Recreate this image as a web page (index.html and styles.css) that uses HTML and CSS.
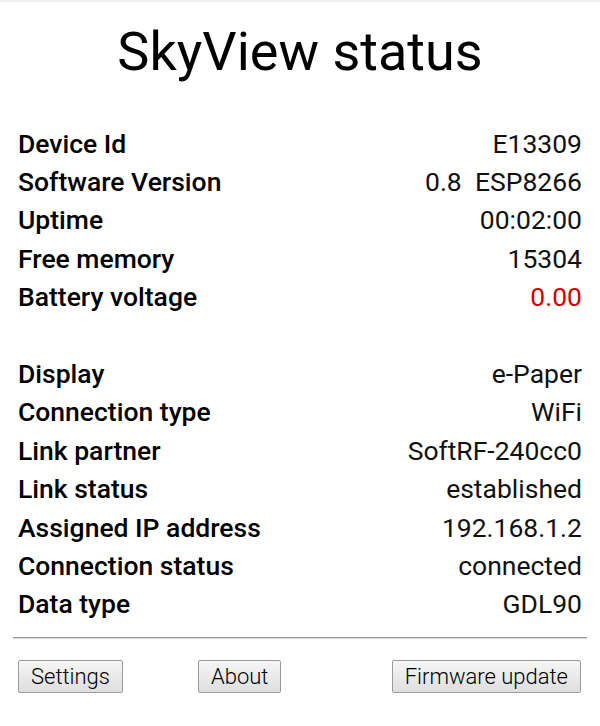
FILE: index.html
```html
<!DOCTYPE html>
<html>
<head>
<meta charset="utf-8">
<link rel="stylesheet" href="styles.css">
</head>
<body>
<div class="topline"></div>
<div class="page">
  <h1 class="title">SkyView status</h1>
  <div class="table">
    <div class="row"><span class="label">Device Id</span><span class="value">E13309</span></div>
    <div class="row"><span class="label">Software Version</span><span class="value">0.8&nbsp;&nbsp;ESP8266</span></div>
    <div class="row"><span class="label">Uptime</span><span class="value">00:02:00</span></div>
    <div class="row"><span class="label">Free memory</span><span class="value">15304</span></div>
    <div class="row"><span class="label">Battery voltage</span><span class="value red">0.00</span></div>
    <div class="row"></div>
    <div class="row"><span class="label">Display</span><span class="value">e-Paper</span></div>
    <div class="row"><span class="label">Connection type</span><span class="value">WiFi</span></div>
    <div class="row"><span class="label">Link partner</span><span class="value">SoftRF-240cc0</span></div>
    <div class="row"><span class="label">Link status</span><span class="value">established</span></div>
    <div class="row"><span class="label">Assigned IP address</span><span class="value">192.168.1.2</span></div>
    <div class="row"><span class="label">Connection status</span><span class="value">connected</span></div>
    <div class="row"><span class="label">Data type</span><span class="value">GDL90</span></div>
  </div>
  <hr class="rule">
  <div class="buttons">
    <button class="btn">Settings</button>
    <button class="btn about">About</button>
    <button class="btn fw">Firmware update</button>
  </div>
</div>
</body>
</html>
```
FILE: styles.css
```css
html, body {
  margin: 0;
  padding: 0;
  background: #fff;
}
body {
  font-family: Roboto, "Noto Sans", sans-serif;
  color: #000;
}
.topline {
  height: 2px;
  background: #eeeeee;
}
.page {
  padding: 0 13px;
}
.title {
  margin: 22px 0 0 0;
  font-size: 54px;
  line-height: 56px;
  font-weight: 400;
  text-align: center;
  height: 100px;
}
.table {
  padding: 0 5px;
}
.row {
  display: flex;
  justify-content: space-between;
  align-items: center;
  height: 38.4px;
  font-size: 26.5px;
}
.label {
  font-weight: 500;
}
.value {
  font-weight: 400;
  color: #111;
}
.red {
  color: #d00000;
}
.rule {
  margin: 14px 0 0 0;
  border: 0;
  border-top: 1px solid #9a9a9a;
  border-bottom: 1px solid #d8d8d8;
  height: 0;
}
.buttons {
  display: flex;
  align-items: center;
  padding: 21px 6px 0 5px;
}
.btn {
  font-family: Roboto, sans-serif;
  font-weight: 300;
  font-size: 22px;
  color: #000;
  height: 33px;
  padding: 0 12px;
  border: 1px solid #9a9a9a;
  border-radius: 2px;
  background: linear-gradient(#f6f6f6, #dedede);
}
.about {
  margin-left: 75px;
}
.fw {
  margin-left: auto;
}
```
